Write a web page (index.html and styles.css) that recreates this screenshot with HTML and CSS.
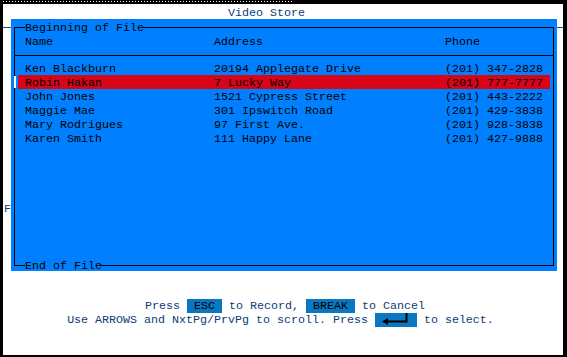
FILE: index.html
```html
<!DOCTYPE html>
<html>
<head>
<meta charset="utf-8">
<link rel="stylesheet" href="styles.css">
</head>
<body>
<div class="screen">
  <div class="topbar"></div>
  <div class="area">
    <div class="title">Video Store</div>
    <div class="main">
      <div class="gutter"><span>F</span></div>
      <div class="panel">
        <div class="box">
          <div class="edge"><span>Beginning of File</span></div>
          <div class="head row">
            <span>Name</span><span>Address</span><span>Phone</span>
          </div>
          <div class="list">
            <div class="row"><span>Ken Blackburn</span><span>20194 Applegate Drive</span><span>(201) 347-2828</span></div>
            <div class="row sel"><span>Robin Hakan</span><span>7 Lucky Way</span><span>(201) 777-7777</span></div>
            <div class="row"><span>John Jones</span><span>1521 Cypress Street</span><span>(201) 443-2222</span></div>
            <div class="row"><span>Maggie Mae</span><span>301 Ipswitch Road</span><span>(201) 429-3838</span></div>
            <div class="row"><span>Mary Rodrigues</span><span>97 First Ave.</span><span>(201) 928-3838</span></div>
            <div class="row"><span>Karen Smith</span><span>111 Happy Lane</span><span>(201) 427-9888</span></div>
          </div>
          <div class="edge"><span>End of File</span></div>
        </div>
      </div>
    </div>
    <div class="help">
      <div class="line l1">Press <span class="key">ESC</span> to Record, <span class="key">BREAK</span> to Cancel</div>
      <div class="line l2">Use ARROWS and NxtPg/PrvPg to scroll. Press <span class="key enter"><svg width="42" height="14" viewBox="0 0 42 14"><path d="M31.5 0V8.5H12" fill="none" stroke="#000" stroke-width="2"/><path d="M7 8.5L13 5V12Z" fill="#000"/></svg></span> to select.</div>
    </div>
  </div>
</div>
</body>
</html>
```

FILE: styles.css
```css
* { box-sizing: border-box; }
html, body { margin: 0; padding: 0; background: #fff; }
body {
  font-family: "Liberation Mono", "DejaVu Sans Mono", monospace;
  font-size: 11.667px;
  line-height: 14px;
}
.screen {
  width: 567px;
  height: 357px;
  background: #000;
  border-left: 3px solid #000;
  border-right: 4px solid #000;
  border-bottom: 2px solid #000;
  display: flex;
  flex-direction: column;
}
.topbar {
  height: 4px;
  background:
    repeating-linear-gradient(90deg, #fff 0 1px, transparent 1px 3px) 0 1px / 290px 1px no-repeat,
    #000;
}
.area {
  flex: 1;
  background:
    linear-gradient(#1c4f8a, #1c4f8a) 0 23px / 100% 1px no-repeat,
    #fff;
  display: flex;
  flex-direction: column;
}
.title {
  height: 15px;
  line-height: 14px;
  padding: 2px 0 0 225px;
  color: #0c3c78;
}
.main {
  display: flex;
  height: 252px;
}
.gutter {
  width: 8px;
  padding-top: 183px;
  color: #0c3c78;
  overflow: hidden;
  white-space: nowrap;
}
.gutter span { display: block; margin-left: 1px; }
.panel {
  width: 546px;
  background: #0080ff;
  padding: 8px 3px 5px 3px;
  display: flex;
}
.box {
  flex: 1;
  border-left: 1px solid #000;
  border-right: 1px solid #000;
  display: flex;
  flex-direction: column;
  color: #000;
}
.edge {
  height: 1px;
  display: flex;
  align-items: center;
}
.edge::before {
  content: "";
  width: 10px;
  height: 1px;
  background: #000;
}
.edge::after {
  content: "";
  flex: 1;
  height: 1px;
  margin-left: -1px;
  background: #000;
}
.edge span { white-space: pre; }
.row {
  display: grid;
  grid-template-columns: 189px 231px 1fr;
  height: 14px;
  padding: 1px 0 0 7px;
  white-space: pre;
}
.head {
  height: 28px;
  padding: 7px 0 6px 10px;
  border-bottom: 1px solid #000;
}
.list {
  flex: 1;
  padding: 5px 3px 0 3px;
}
.sel {
  background: #d80418;
  position: relative;
}
.sel::before {
  content: "";
  position: absolute;
  left: -4px;
  top: 1px;
  width: 2px;
  height: 12px;
  background: #fff;
}
.help {
  margin-top: 28px;
  display: flex;
  flex-direction: column;
  align-items: center;
  color: #0c3c78;
  white-space: pre;
}
.line { height: 14px; line-height: 15px; }
.l1 { margin-left: 4px; }
.l2 { margin-right: 5px; }
.key {
  display: inline-block;
  background: #0a78c0;
  color: #000;
  height: 14px;
  line-height: 15px;
  padding: 0 7px;
  vertical-align: top;
}
.enter { padding: 0; width: 42px; }
.enter svg { display: block; }
```
